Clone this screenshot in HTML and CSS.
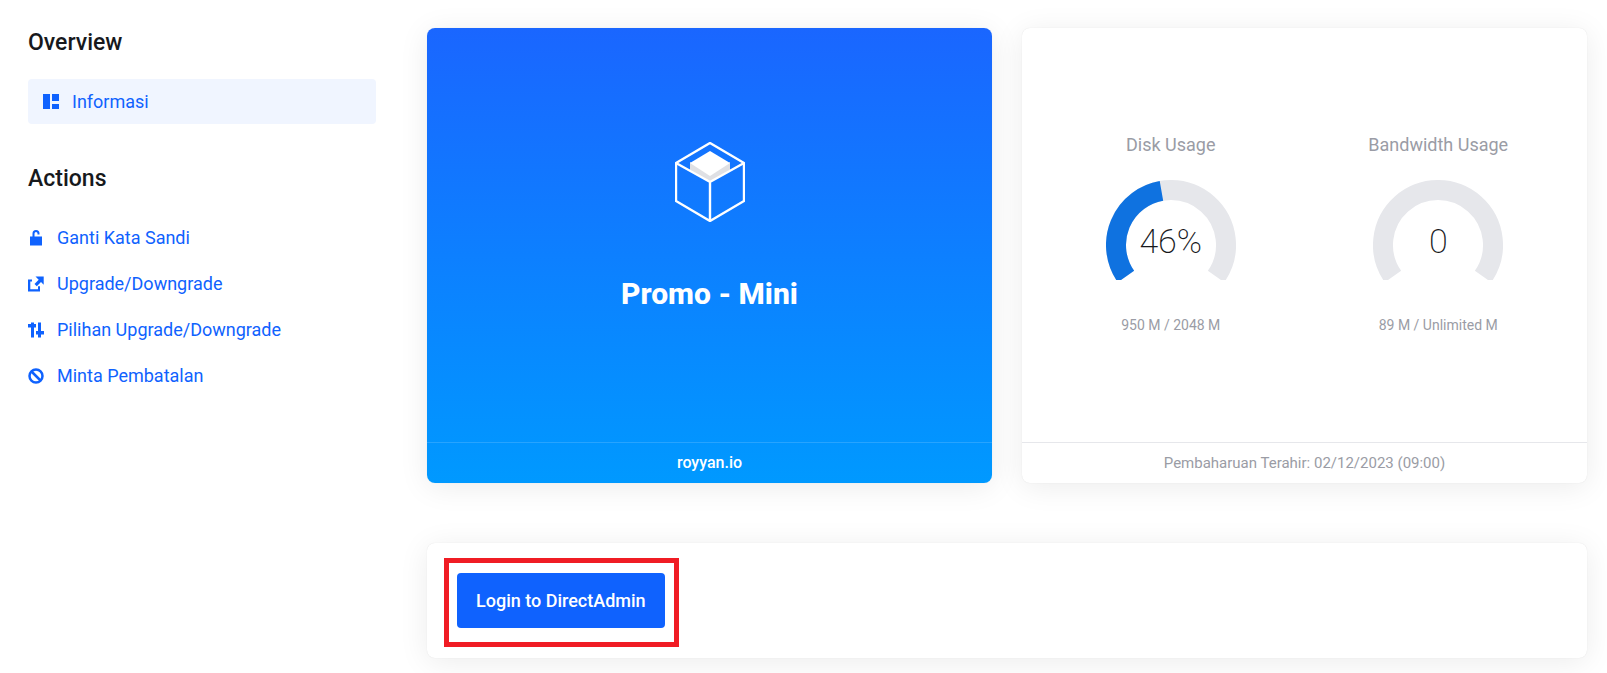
FILE: index.html
```html
<!DOCTYPE html>
<html lang="id">
<head>
    <meta charset="UTF-8">
    <meta name="viewport" content="width=device-width, initial-scale=1.0">
    <title>Promo - Mini</title>
    <link rel="stylesheet" href="styles.css">
</head>
<body>

<div class="page">
    <aside class="sidebar">
        <h2 class="sidebar-title">Overview</h2>
        <ul class="menu">
            <li>
                <a class="menu-link active" href="#informasi">
                    <svg class="icon" viewBox="0 0 16 16"><path d="M0 0h7v15H0zM9 0h7v7H9zM9 10h7v5H9z"/></svg>
                    Informasi
                </a>
            </li>
        </ul>

        <h2 class="sidebar-title">Actions</h2>
        <ul class="menu">
            <li>
                <a class="menu-link" href="#password">
                    <svg class="icon" viewBox="0 0 16 16"><path d="M2 6.500h2.500V3.500a3.500 3.500 0 0 1 7 0V4.500h-2V3.500a1.500 1.500 0 0 0-3 0V6.500H14V15.500H2z"/></svg>
                    Ganti Kata Sandi
                </a>
            </li>
            <li>
                <a class="menu-link" href="#upgrade">
                    <svg class="icon" viewBox="0 0 16 16"><path d="M0 3.500h4v2H2.300v7.700H10v-3h2V15.500H0zM7.500 .500H15.700V8.700L13 6 8.800 10.200 6.500 7.900l4.200-4.200z"/></svg>
                    Upgrade/Downgrade
                </a>
            </li>
            <li>
                <a class="menu-link" href="#options">
                    <svg class="icon" viewBox="0 0 16 16"><path d="M3 .500h3V2h2v3.500H6v10H3v-10H0V2h3zM10 .500h3v8.500h3v3.500h-3v3h-3v-3H8V9h2z"/></svg>
                    Pilihan Upgrade/Downgrade
                </a>
            </li>
            <li>
                <a class="menu-link" href="#cancel">
                    <svg class="icon icon-line" viewBox="0 0 16 16"><circle cx="8" cy="8" r="6.500"/><path d="M3.500 3.500l9 9"/></svg>
                    Minta Pembatalan
                </a>
            </li>
        </ul>
    </aside>

    <main class="content">
        <div class="cards">
            <section class="card product">
                <div class="card-body product-body">
                    <svg class="cube" viewBox="0 0 70 80">
                        <path class="cube-side" d="M15 20l20 12 20-12v8L35 40 15 28z"/>
                        <path class="cube-top" d="M35 9l20 12-20 13-20-13z"/>
                        <path class="cube-line" d="M35 1l34 20v38L35 79 1 59V21zM1 21l34 19 34-19M35 40v39"/>
                    </svg>
                    <h1 class="product-name">Promo - Mini</h1>
                </div>
                <div class="card-footer"><a class="domain" href="#domain">royyan.io</a></div>
            </section>

            <section class="card">
                <div class="card-body usage">
                    <div class="usage-item">
                        <h3 class="usage-title">Disk Usage</h3>
                        <div class="gauge">
                            <svg class="gauge-svg" viewBox="0 0 130 100">
                                <path class="gauge-track" d="M19.950 96.550A55 55 0 1 1 110.050 96.550"/>
                                <path class="gauge-value" d="M19.950 96.550A55 55 0 0 1 55.450 10.840"/>
                            </svg>
                            <span class="gauge-text">46%</span>
                        </div>
                        <p class="usage-detail">950 M / 2048 M</p>
                    </div>
                    <div class="usage-item">
                        <h3 class="usage-title">Bandwidth Usage</h3>
                        <div class="gauge">
                            <svg class="gauge-svg" viewBox="0 0 130 100">
                                <path class="gauge-track" d="M19.950 96.550A55 55 0 1 1 110.050 96.550"/>
                            </svg>
                            <span class="gauge-text">0</span>
                        </div>
                        <p class="usage-detail">89 M / Unlimited M</p>
                    </div>
                </div>
                <div class="card-footer">Pembaharuan Terahir: 02/12/2023 (09:00)</div>
            </section>
        </div>

        <section class="card login">
            <div class="highlight">
                <button class="login-btn" type="button">Login to DirectAdmin</button>
            </div>
        </section>
    </main>
</div>

</body>
</html>
```
FILE: styles.css
```css
* {
    box-sizing: border-box;
}
body {
    font-family: Roboto, sans-serif;
    font-size: 18px;
    margin: 0;
    color: #17191c;
    background-color: #fff;
}
h1, h2, h3, p, ul {
    margin: 0;
    padding: 0;
}
.page {
    display: flex;
    gap: 51px;
    padding: 28px 20px 15px 28px;
}

/* Sidebar */
.sidebar {
    width: 348px;
    flex-shrink: 0;
}
.sidebar-title {
    font-size: 23px;
    font-weight: 500;
    line-height: 30px;
    margin-bottom: 21px;
}
.menu {
    list-style-type: none;
    margin-bottom: 40px;
}
.menu li {
    margin-bottom: 1px;
}
.menu-link {
    display: flex;
    align-items: center;
    gap: 13px;
    line-height: 45px;
    color: #0f62fe;
    text-decoration: none;
    border-radius: 4px;
}
.menu-link.active {
    padding: 0 15px;
    background-color: #f0f5ff;
}
.icon {
    width: 16px;
    height: 16px;
    fill: currentColor;
}
.icon-line {
    fill: none;
    stroke: currentColor;
    stroke-width: 2.500;
}

/* Cards */
.content {
    flex: 1;
}
.cards {
    display: grid;
    grid-template-columns: 1fr 1fr;
    gap: 30px;
    margin-bottom: 60px;
}
.card {
    display: flex;
    flex-direction: column;
    background-color: #fff;
    border-radius: 8px;
    box-shadow: 0 0 1px rgba(0, 0, 0, 0.12), 0 4px 30px rgba(0, 0, 0, 0.08);
}
.card-body {
    flex: 1;
    min-height: 414px;
}
.card-footer {
    border-top: 1px solid #e6e7eb;
    font-size: 15px;
    line-height: 40px;
    text-align: center;
    color: #9a9ca5;
}

.product {
    color: #fff;
    background: linear-gradient(#1a66ff, #0099ff);
}
.product-body {
    display: flex;
    flex-direction: column;
    align-items: center;
    justify-content: center;
    gap: 54px;
    padding-bottom: 16px;
}
.product .card-footer {
    border-color: rgba(255, 255, 255, 0.15);
}
.domain {
    font-size: 16px;
    font-weight: 500;
    color: #fff;
    text-decoration: none;
}
.product-name {
    font-size: 30px;
    font-weight: 800;
    line-height: 36px;
}
.cube {
    width: 70px;
    height: 80px;
}
.cube-top {
    fill: #fff;
}
.cube-side {
    fill: #dfe0e4;
}
.cube-line {
    fill: none;
    stroke: #fff;
    stroke-width: 2.400;
}

/* Usage gauges */
.usage {
    display: flex;
    align-items: center;
    padding: 0 15px 2px;
}
.usage-item {
    flex: 1;
    text-align: center;
}
.usage-title {
    font-size: 18px;
    font-weight: 400;
    line-height: 24px;
    color: #9a9ca5;
    margin-bottom: 23px;
}
.gauge {
    position: relative;
    width: 130px;
    margin: 0 auto 34px;
}
.gauge-svg {
    display: block;
    width: 100%;
}
.gauge-track, .gauge-value {
    fill: none;
    stroke: #e6e7eb;
    stroke-width: 20;
}
.gauge-value {
    stroke: #0f72e0;
}
.gauge-text {
    position: absolute;
    top: 39px;
    left: 0;
    width: 100%;
    font-size: 34px;
    font-weight: 200;
    line-height: 44px;
}
.usage-detail {
    font-size: 14px;
    line-height: 22px;
    color: #9a9ca5;
}

/* Login */
.login {
    align-items: flex-start;
    padding: 15px 17px 11px;
}
.highlight {
    border: 5px solid #f01c24;
    padding: 10px 9px 14px 8px;
}
.login-btn {
    display: block;
    padding: 0 19px;
    font-family: inherit;
    font-size: 18px;
    font-weight: 500;
    line-height: 55px;
    color: #fff;
    background-color: #0f62fe;
    border: none;
    border-radius: 4px;
    cursor: pointer;
}
.login-btn:hover {
    background-color: #0050e6;
}
```
